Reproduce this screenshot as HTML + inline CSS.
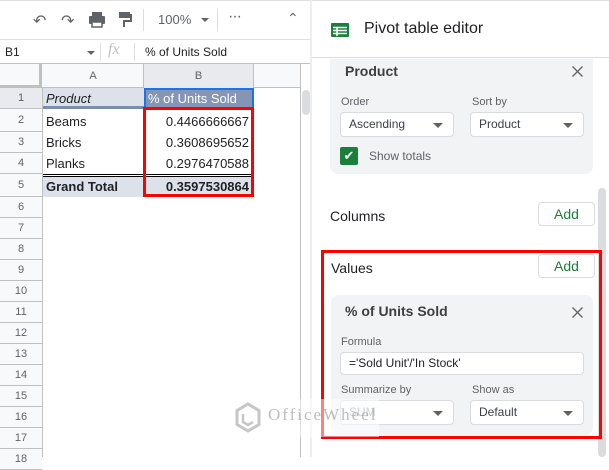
<!DOCTYPE html>
<html><head><style>
*{box-sizing:border-box;margin:0;padding:0}
body{width:609px;height:457px;overflow:hidden;background:#fff;font-family:"Liberation Sans",Arial,sans-serif;position:relative;color:#202124}
.a{position:absolute}
.rn{position:absolute;left:0;width:42px;text-align:center;font-size:11px;color:#5f6368;border-bottom:1px solid #c0c0c0;background:#f8f9fa}
.cell{position:absolute;font-size:13px;line-height:21px;white-space:nowrap}
.sel{position:absolute;background:#fff;border:1px solid #dadce0;border-radius:4px;height:25px;font-size:12px;color:#3c4043;padding-left:8px;line-height:23px}
.sel:after{content:"";position:absolute;right:10px;top:10px;border-left:5px solid transparent;border-right:5px solid transparent;border-top:5px solid #5f6368}
.sel.nf:after{display:none}
.lbl{position:absolute;font-size:11px;color:#5f6368}
.btn{position:absolute;border:1px solid #dadce0;border-radius:4px;background:#fff;color:#188038;font-size:14px;text-align:center;line-height:22px}
</style></head><body>
<!-- toolbar -->
<div class="a" style="left:0;top:0;width:312px;height:40px;border-bottom:1px solid #e0e0e0;border-top:1px solid #e0e0e0"></div>
<div class="a" style="left:33px;top:11px;font-size:16px;color:#5f6368">↶</div>
<div class="a" style="left:61px;top:11px;font-size:16px;color:#5f6368">↷</div>
<svg class="a" style="left:88px;top:12px" width="18" height="16"><rect x="4" y="0" width="10" height="4" fill="#5f6368"/><rect x="1" y="4" width="16" height="8" rx="1" fill="#5f6368"/><rect x="4" y="10" width="10" height="5" fill="#fff" stroke="#5f6368" stroke-width="1.5"/></svg>
<svg class="a" style="left:118px;top:11px" width="14" height="18"><rect x="1" y="1" width="11" height="6" fill="#5f6368"/><path d="M12 4h1v6H6v6" stroke="#5f6368" stroke-width="2" fill="none"/></svg>
<div class="a" style="left:143px;top:9px;width:1px;height:22px;background:#dadce0"></div>
<div class="a" style="left:158px;top:12px;font-size:13px;color:#5f6368">100%</div>
<div class="a" style="left:201px;top:18px;border-left:4px solid transparent;border-right:4px solid transparent;border-top:4px solid #5f6368"></div>
<div class="a" style="left:217px;top:9px;width:1px;height:22px;background:#dadce0"></div>
<div class="a" style="left:228px;top:8px;font-size:16px;color:#5f6368;letter-spacing:-1px">···</div>
<div class="a" style="left:287px;top:10px;font-size:14px;color:#5f6368">&#8963;</div>
<!-- formula bar -->
<div class="a" style="left:0;top:40px;width:312px;height:24px;border-bottom:1px solid #c0c0c0"></div>
<div class="a" style="left:5px;top:45px;font-size:12px">B1</div>
<div class="a" style="left:87px;top:51px;border-left:4px solid transparent;border-right:4px solid transparent;border-top:4px solid #5f6368"></div>
<div class="a" style="left:100px;top:43px;width:1px;height:18px;background:#e0e0e0"></div>
<div class="a" style="left:108px;top:41px;font-size:16px;color:#c0c0c0;font-style:italic;font-family:'Liberation Serif',serif">fx</div>
<div class="a" style="left:134px;top:43px;width:1px;height:18px;background:#e0e0e0"></div>
<div class="a" style="left:145px;top:45px;font-size:12px">% of Units Sold</div>
<!-- column headers -->
<div class="a" style="left:0;top:64px;width:300px;height:24px;background:#f8f9fa;border-bottom:1px solid #c0c0c0"></div>
<div class="a" style="left:0;top:64px;width:42px;height:24px;background:#f8f9fa;border-right:3px solid #c0c0c0;border-bottom:3px solid #c0c0c0"></div>
<div class="a" style="left:43px;top:64px;width:101px;height:24px;border-right:1px solid #c0c0c0;text-align:center;font-size:11px;line-height:24px;color:#5f6368">A</div>
<div class="a" style="left:144px;top:64px;width:110px;height:24px;border-right:1px solid #c0c0c0;text-align:center;font-size:11px;line-height:24px;color:#5f6368;background:#e8eaed">B</div>
<div class="a" style="left:42px;top:88px;width:1px;height:369px;background:#c0c0c0"></div>
<div class="a" style="left:300px;top:64px;width:1px;height:393px;background:#c0c0c0"></div>
<div class="a" style="left:302px;top:90px;width:8px;height:25px;background:#dadce0;border-radius:4px"></div>
<div class="a" style="left:310px;top:0;width:2px;height:457px;background:#eee"></div>
<!-- row numbers -->
<div class="rn" style="top:88px;height:21px;line-height:21px;background:#e8eaed">1</div>
<div class="rn" style="top:109px;height:23px;line-height:23px">2</div>
<div class="rn" style="top:132px;height:21px;line-height:21px">3</div>
<div class="rn" style="top:153px;height:21px;line-height:21px">4</div>
<div class="rn" style="top:174px;height:23px;line-height:23px">5</div>
<div class="rn" style="top:197px;height:21px;line-height:21px">6</div>
<div class="rn" style="top:218px;height:21px;line-height:21px">7</div>
<div class="rn" style="top:239px;height:21px;line-height:21px">8</div>
<div class="rn" style="top:260px;height:21px;line-height:21px">9</div>
<div class="rn" style="top:281px;height:21px;line-height:21px">10</div>
<div class="rn" style="top:302px;height:21px;line-height:21px">11</div>
<div class="rn" style="top:323px;height:21px;line-height:21px">12</div>
<div class="rn" style="top:344px;height:21px;line-height:21px">13</div>
<div class="rn" style="top:365px;height:21px;line-height:21px">14</div>
<div class="rn" style="top:386px;height:21px;line-height:21px">15</div>
<div class="rn" style="top:407px;height:21px;line-height:21px">16</div>
<div class="rn" style="top:428px;height:21px;line-height:21px">17</div>
<div class="rn" style="top:449px;height:21px;line-height:21px">18</div>
<!-- data -->
<div class="a" style="left:43px;top:88px;width:101px;height:21px;background:#dde1ea;border-bottom:3px solid #7b8db1"></div>
<div class="a" style="left:144px;top:88px;width:110px;height:21px;background:#8595b4;border:2px solid #1a73e8"></div>
<div class="cell" style="left:46px;top:88px;font-style:italic">Product</div>
<div class="cell" style="left:148px;top:88px;color:#fff">% of Units Sold</div>
<div class="cell" style="left:46px;top:111px">Beams</div>
<div class="cell" style="left:46px;top:132px">Bricks</div>
<div class="cell" style="left:46px;top:153px">Planks</div>
<div class="cell" style="right:360px;top:111px">0.4466666667</div>
<div class="cell" style="right:360px;top:132px">0.3608695652</div>
<div class="cell" style="right:360px;top:153px">0.2976470588</div>
<div class="a" style="left:43px;top:174px;width:210px;height:3px;border-top:1px solid #000;border-bottom:1px solid #000"></div>
<div class="a" style="left:43px;top:177px;width:210px;height:20px;background:#dde1ea"></div>
<div class="cell" style="left:46px;top:176px;font-weight:bold">Grand Total</div>
<div class="cell" style="right:360px;top:176px;font-weight:bold">0.3597530864</div>
<div class="a" style="left:143px;top:107px;width:111px;height:90px;border:3px solid #f00"></div>
<!-- panel -->
<div class="a" style="left:312px;top:0;width:297px;height:58px;border-bottom:1px solid #dadce0;border-top:1px solid #e0e0e0"></div>
<svg class="a" style="left:331px;top:23px" width="18" height="14"><rect width="18" height="14" rx="1" fill="#188038"/><path d="M2 4.5h14M2 7.5h14M2 10.5h14M6 4v9" stroke="#fff" stroke-width="1.5"/></svg>
<div class="a" style="left:364px;top:20px;font-size:16px">Pivot table editor</div>
<div class="a" style="left:330px;top:59px;width:263px;height:115px;background:#f1f3f4;border-radius:0 0 8px 8px"></div>
<div class="a" style="left:345px;top:63px;font-size:14px;font-weight:bold;color:#3c4043">Product</div>
<svg class="a" style="left:572px;top:66px" width="11" height="11"><path d="M0.5 0.5l10 10M10.5 0.5l-10 10" stroke="#5f6368" stroke-width="1.3"/></svg>
<div class="lbl" style="left:341px;top:96px">Order</div>
<div class="lbl" style="left:472px;top:96px">Sort by</div>
<div class="sel" style="left:340px;top:112px;width:114px">Ascending</div>
<div class="sel" style="left:470px;top:112px;width:114px">Product</div>
<div class="a" style="left:340px;top:147px;width:18px;height:18px;background:#188038;border-radius:2px;color:#fff;font-size:13px;text-align:center;line-height:18px">✔</div>
<div class="a" style="left:369px;top:149px;font-size:12px;color:#5f6368">Show totals</div>
<div class="a" style="left:598px;top:188px;width:8px;height:269px;background:#dadce0;border-radius:4px"></div>
<div class="a" style="left:330px;top:208px;font-size:14px">Columns</div>
<div class="btn" style="left:538px;top:202px;width:57px;height:24px">Add</div>
<div class="a" style="left:321px;top:250px;width:281px;height:189px;border:3px solid #f00"></div>
<div class="a" style="left:331px;top:260px;font-size:14px">Values</div>
<div class="btn" style="left:538px;top:254px;width:57px;height:24px">Add</div>
<div class="a" style="left:331px;top:295px;width:262px;height:140px;background:#f1f3f4;border-radius:8px"></div>
<div class="a" style="left:345px;top:303px;font-size:14px;font-weight:bold;color:#3c4043">% of Units Sold</div>
<svg class="a" style="left:572px;top:307px" width="11" height="11"><path d="M0.5 0.5l10 10M10.5 0.5l-10 10" stroke="#5f6368" stroke-width="1.3"/></svg>
<div class="lbl" style="left:341px;top:336px">Formula</div>
<div class="sel nf" style="left:340px;top:352px;width:244px;height:23px;line-height:21px;color:#202124">='Sold Unit'/'In Stock'</div>
<div class="lbl" style="left:341px;top:384px">Summarize by</div>
<div class="lbl" style="left:472px;top:384px">Show as</div>
<div class="sel" style="left:340px;top:400px;width:114px;color:#9aa0a6">SUM</div>
<div class="sel" style="left:470px;top:400px;width:114px">Default</div>
<div class="a" style="left:229px;top:399px;width:150px;height:38px;background:rgba(255,255,255,0.5)"></div>
<div style="opacity:0.55">
<div class="a" style="left:268px;top:405px;font-size:17px;color:#888;font-family:'Liberation Serif',serif;letter-spacing:2px">OfficeWheel</div>
<svg class="a" style="left:234px;top:402px" width="28" height="32"><path d="M14 2l11 6.5v14L14 29 3 22.5v-14z" fill="none" stroke="#999" stroke-width="3"/><path d="M9 12v8l5 3 5-3" fill="none" stroke="#999" stroke-width="2.5"/></svg>
</div>
</body></html>
